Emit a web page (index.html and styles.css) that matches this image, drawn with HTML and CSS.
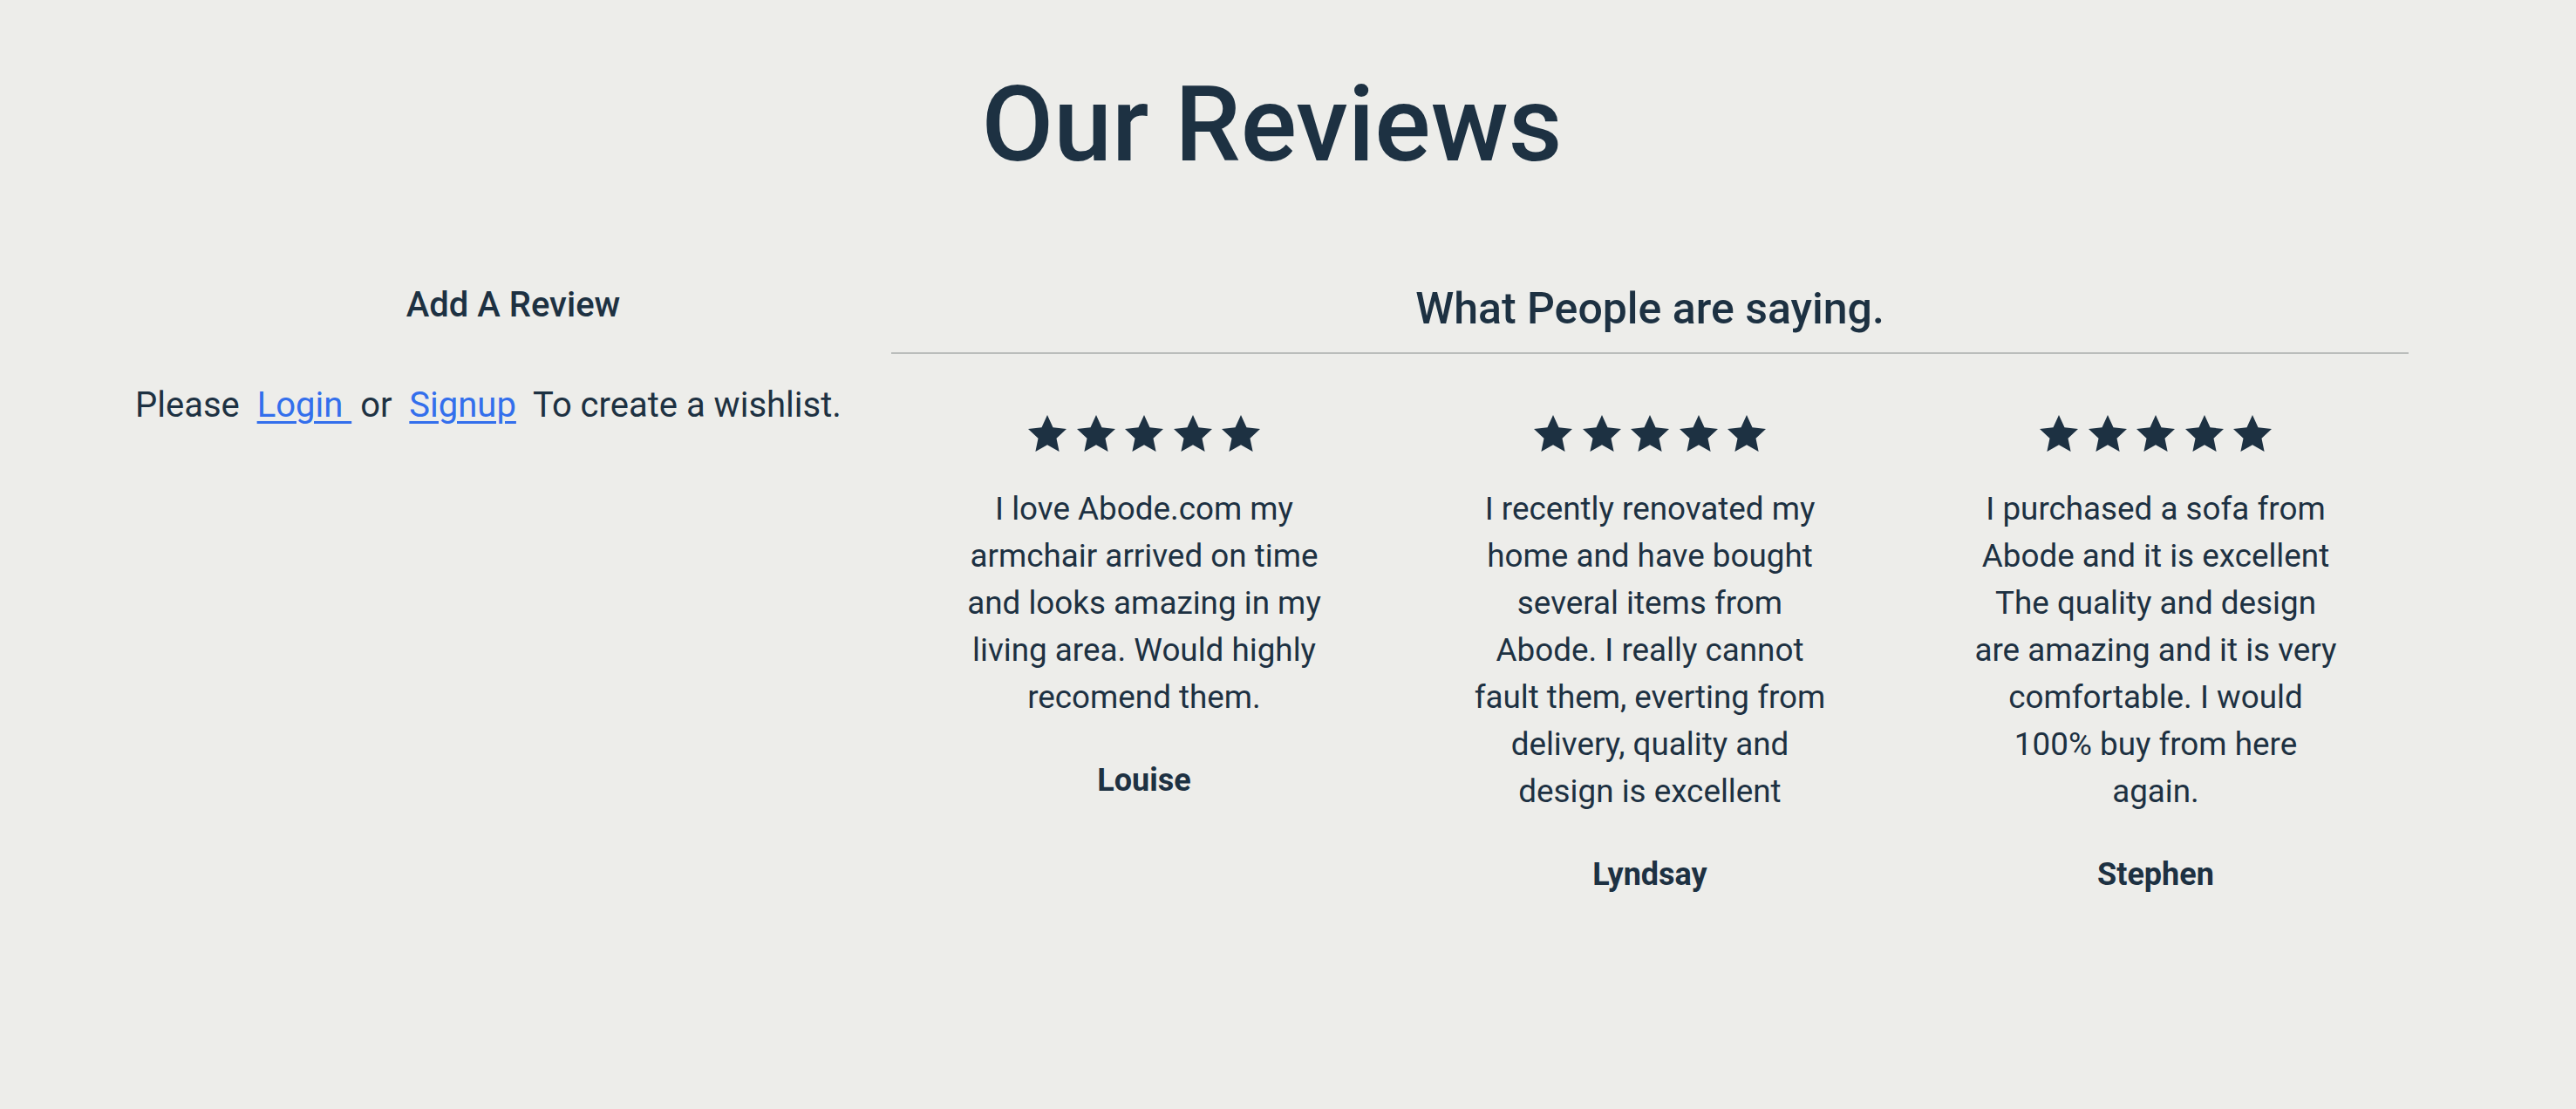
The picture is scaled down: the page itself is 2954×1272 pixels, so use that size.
FILE: index.html
```html
<!DOCTYPE html>
<html lang="en">
<head>
<meta charset="utf-8">
<title>Our Reviews</title>
<link rel="stylesheet" href="styles.css">
</head>
<body>
<div class="container">
  <h1 class="title">Our Reviews</h1>
  <div class="main">
    <section class="add-review">
      <h2 class="add-title">Add A Review</h2>
      <p class="login-msg">Please&nbsp; <a href="#">Login&nbsp;</a> or&nbsp; <a href="#">Signup</a>&nbsp; To create a wishlist.</p>
    </section>
    <section class="reviews">
      <h2 class="reviews-title">What People are saying.</h2>
      <hr class="divider">
      <div class="review-grid">
        <div class="review">
          <div class="stars">
            <svg class="star" viewBox="1.5 1.5 21 20"><polygon points="12,1.5 15.1,8.3 22.5,9.1 17,14.2 18.5,21.5 12,17.8 5.5,21.5 7,14.2 1.5,9.1 8.9,8.3"/></svg>
            <svg class="star" viewBox="1.5 1.5 21 20"><polygon points="12,1.5 15.1,8.3 22.5,9.1 17,14.2 18.5,21.5 12,17.8 5.5,21.5 7,14.2 1.5,9.1 8.9,8.3"/></svg>
            <svg class="star" viewBox="1.5 1.5 21 20"><polygon points="12,1.5 15.1,8.3 22.5,9.1 17,14.2 18.5,21.5 12,17.8 5.5,21.5 7,14.2 1.5,9.1 8.9,8.3"/></svg>
            <svg class="star" viewBox="1.5 1.5 21 20"><polygon points="12,1.5 15.1,8.3 22.5,9.1 17,14.2 18.5,21.5 12,17.8 5.5,21.5 7,14.2 1.5,9.1 8.9,8.3"/></svg>
            <svg class="star" viewBox="1.5 1.5 21 20"><polygon points="12,1.5 15.1,8.3 22.5,9.1 17,14.2 18.5,21.5 12,17.8 5.5,21.5 7,14.2 1.5,9.1 8.9,8.3"/></svg>
          </div>
          <p class="review-text">I love Abode.com my armchair arrived on time and looks amazing in my living area. Would highly recomend them.</p>
          <p class="review-name">Louise</p>
        </div>
        <div class="review">
          <div class="stars">
            <svg class="star" viewBox="1.5 1.5 21 20"><polygon points="12,1.5 15.1,8.3 22.5,9.1 17,14.2 18.5,21.5 12,17.8 5.5,21.5 7,14.2 1.5,9.1 8.9,8.3"/></svg>
            <svg class="star" viewBox="1.5 1.5 21 20"><polygon points="12,1.5 15.1,8.3 22.5,9.1 17,14.2 18.5,21.5 12,17.8 5.5,21.5 7,14.2 1.5,9.1 8.9,8.3"/></svg>
            <svg class="star" viewBox="1.5 1.5 21 20"><polygon points="12,1.5 15.1,8.3 22.5,9.1 17,14.2 18.5,21.5 12,17.8 5.5,21.5 7,14.2 1.5,9.1 8.9,8.3"/></svg>
            <svg class="star" viewBox="1.5 1.5 21 20"><polygon points="12,1.5 15.1,8.3 22.5,9.1 17,14.2 18.5,21.5 12,17.8 5.5,21.5 7,14.2 1.5,9.1 8.9,8.3"/></svg>
            <svg class="star" viewBox="1.5 1.5 21 20"><polygon points="12,1.5 15.1,8.3 22.5,9.1 17,14.2 18.5,21.5 12,17.8 5.5,21.5 7,14.2 1.5,9.1 8.9,8.3"/></svg>
          </div>
          <p class="review-text">I recently renovated my home and have bought several items from Abode. I really cannot fault them, everting from delivery, quality and design is excellent</p>
          <p class="review-name">Lyndsay</p>
        </div>
        <div class="review">
          <div class="stars">
            <svg class="star" viewBox="1.5 1.5 21 20"><polygon points="12,1.5 15.1,8.3 22.5,9.1 17,14.2 18.5,21.5 12,17.8 5.5,21.5 7,14.2 1.5,9.1 8.9,8.3"/></svg>
            <svg class="star" viewBox="1.5 1.5 21 20"><polygon points="12,1.5 15.1,8.3 22.5,9.1 17,14.2 18.5,21.5 12,17.8 5.5,21.5 7,14.2 1.5,9.1 8.9,8.3"/></svg>
            <svg class="star" viewBox="1.5 1.5 21 20"><polygon points="12,1.5 15.1,8.3 22.5,9.1 17,14.2 18.5,21.5 12,17.8 5.5,21.5 7,14.2 1.5,9.1 8.9,8.3"/></svg>
            <svg class="star" viewBox="1.5 1.5 21 20"><polygon points="12,1.5 15.1,8.3 22.5,9.1 17,14.2 18.5,21.5 12,17.8 5.5,21.5 7,14.2 1.5,9.1 8.9,8.3"/></svg>
            <svg class="star" viewBox="1.5 1.5 21 20"><polygon points="12,1.5 15.1,8.3 22.5,9.1 17,14.2 18.5,21.5 12,17.8 5.5,21.5 7,14.2 1.5,9.1 8.9,8.3"/></svg>
          </div>
          <p class="review-text">I purchased a sofa from Abode and it is excellent The quality and design are amazing and it is very comfortable. I would 100% buy from here again.</p>
          <p class="review-name">Stephen</p>
        </div>
      </div>
    </section>
  </div>
</div>
</body>
</html>
```
FILE: styles.css
```css
html, body {
  margin: 0;
  padding: 0;
  background: #ededea;
}
body {
  font-family: Roboto, "Liberation Sans", sans-serif;
  color: #1d3142;
  min-height: 1272px;
}
.container {
  margin: 0 192px 0 155px;
}
.title {
  margin: 0;
  padding-top: 73px;
  font-size: 120px;
  font-weight: 500;
  line-height: normal;
  text-align: center;
}
.main {
  display: grid;
  grid-template-columns: 867px 1fr;
  margin-top: 110px;
}
.add-review {
  min-width: 0;
}
.add-title {
  margin: 3px 0 0;
  font-size: 40px;
  font-weight: 500;
  line-height: normal;
  text-align: center;
}
.login-msg {
  margin: 68px 0 0;
  font-size: 40px;
  line-height: normal;
  white-space: nowrap;
}
.login-msg a {
  color: #336fec;
  text-decoration: underline;
  text-decoration-thickness: 3px;
  text-underline-offset: 5px;
}
.reviews-title {
  margin: 2px 0 0;
  font-size: 50px;
  font-weight: 500;
  line-height: normal;
  text-align: center;
}
.divider {
  margin: 21px 0 0;
  border: 0;
  height: 2px;
  background: #babdbb;
}
.review-grid {
  display: grid;
  grid-template-columns: repeat(3, 1fr);
  margin-top: 70px;
}
.review {
  display: flex;
  flex-direction: column;
  align-items: center;
}
.stars {
  display: flex;
  gap: 11.5px;
  height: 42px;
}
.star {
  width: 44px;
  height: 42px;
  fill: #1d3142;
  display: block;
}
.review-text {
  width: 420px;
  margin: 39px 0 0;
  font-size: 36.8px;
  line-height: 54px;
  text-align: center;
}
.review-name {
  margin: 41px 0 0;
  font-size: 36px;
  line-height: 54px;
  font-weight: 700;
  text-align: center;
}
```
